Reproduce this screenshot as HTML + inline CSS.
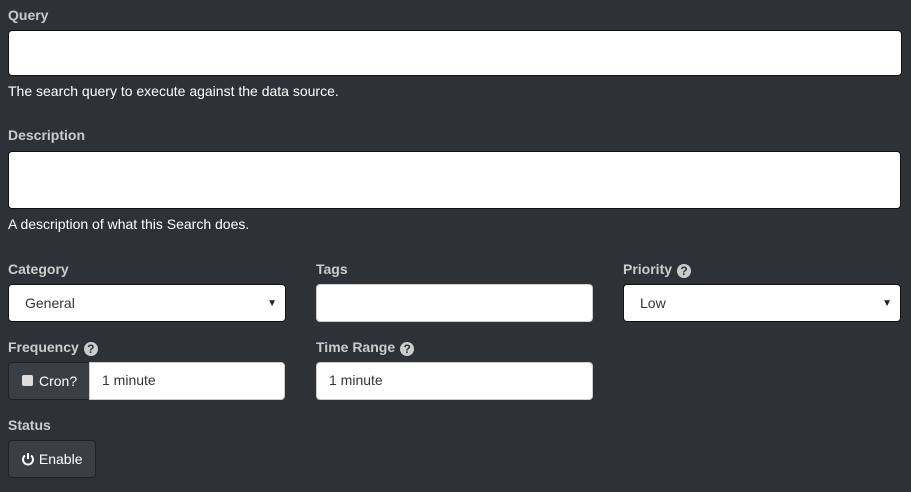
<!DOCTYPE html>
<html><head><style>
body{margin:0;background:#2e3236;font-family:"Liberation Sans",sans-serif;font-size:14px;color:#fff;width:911px;height:492px;overflow:hidden;position:relative}
.a{position:absolute}
.lbl{font-weight:bold;color:#ccc;font-size:14px}
.in{background:#fff;border:1px solid #111;border-radius:4px;box-sizing:border-box;color:#333;font-size:14px}
.q{display:inline-block;width:14px;height:14px;border-radius:50%;background:#ccc;color:#2e3236;font-size:12px;text-align:center;line-height:14px;vertical-align:-1px;margin-left:5px}
.arr{position:absolute;right:8px;top:13px;font-size:10px;color:#222}
.btn{background:#3a3f44;border:1px solid #222;box-sizing:border-box;color:#fff}
</style></head><body>
<div class="a lbl" style="left:8px;top:7px">Query</div>
<div class="a in" style="left:8px;top:30px;width:894px;height:46px"></div>
<div class="a" style="left:8px;top:83px">The search query to execute against the data source.</div>
<div class="a lbl" style="left:8px;top:127px">Description</div>
<div class="a in" style="left:8px;top:151px;width:893px;height:58px"></div>
<div class="a" style="left:8px;top:216px">A description of what this Search does.</div>

<div class="a lbl" style="left:8px;top:261px">Category</div>
<div class="a in" style="left:8px;top:284px;width:278px;height:38px;padding:10px 16px">General<span class="arr">▼</span></div>
<div class="a lbl" style="left:316px;top:261px">Tags</div>
<div class="a in" style="left:316px;top:284px;width:277px;height:38px;border-color:#ccc"></div>
<div class="a lbl" style="left:623px;top:261px">Priority<span class="q">?</span></div>
<div class="a in" style="left:623px;top:284px;width:278px;height:38px;padding:10px 16px">Low<span class="arr">▼</span></div>

<div class="a lbl" style="left:8px;top:339px">Frequency<span class="q">?</span></div>
<div class="a btn" style="left:8px;top:362px;width:82px;height:38px;border-radius:4px 0 0 4px;padding:10px 0 0 13px"><span style="display:inline-block;width:11px;height:11px;background:#ddd;border-radius:2px;margin-right:6px;vertical-align:0px"></span>Cron?</div>
<div class="a in" style="left:89px;top:362px;width:196px;height:38px;border-radius:0 4px 4px 0;border-color:#ccc;padding:9px 12px">1 minute</div>
<div class="a lbl" style="left:316px;top:339px">Time Range<span class="q">?</span></div>
<div class="a in" style="left:316px;top:362px;width:277px;height:38px;border-color:#ccc;padding:9px 12px">1 minute</div>

<div class="a lbl" style="left:8px;top:417px">Status</div>
<div class="a btn" style="left:8px;top:440px;width:88px;height:38px;border-radius:4px;padding:10px 0 0 12px">
<svg width="14" height="14" viewBox="0 0 14 14" style="vertical-align:-2px"><path d="M4 3.5A5 5 0 1 0 10 3.5" fill="none" stroke="#fff" stroke-width="2"/><path d="M7 1v6" stroke="#fff" stroke-width="2"/></svg> Enable</div>
</body></html>
